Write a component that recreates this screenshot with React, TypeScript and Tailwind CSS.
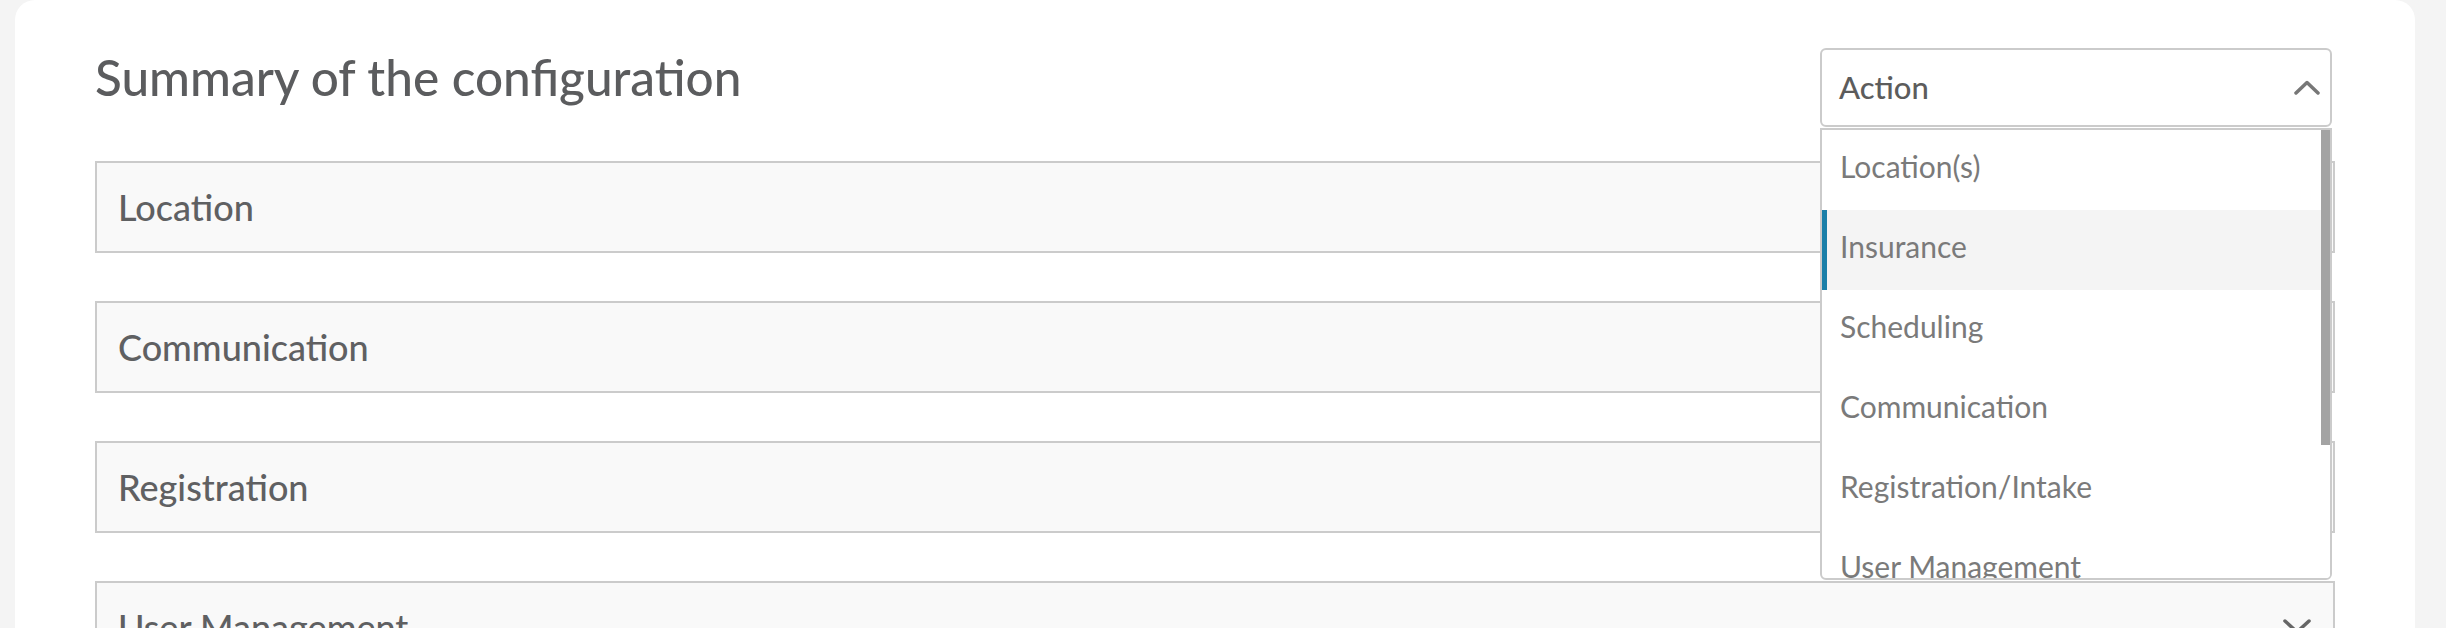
import React from "react";

const sections = ["Location", "Communication", "Registration", "User Management"];
const options = [
  "Location(s)",
  "Insurance",
  "Scheduling",
  "Communication",
  "Registration/Intake",
  "User Management",
];

function ChevronDown() {
  return (
    <svg width="28" height="16" viewBox="0 0 28 16" fill="none">
      <path d="M2 2 L14 13 L26 2" stroke="#666" strokeWidth="3.5" strokeLinecap="round" strokeLinejoin="round" />
    </svg>
  );
}

function ChevronUp() {
  return (
    <svg width="26" height="15" viewBox="0 0 26 15" fill="none">
      <path d="M2 13 L13 2.5 L24 13" stroke="#777" strokeWidth="3.5" strokeLinecap="round" strokeLinejoin="round" />
    </svg>
  );
}

export default function App() {
  return (
    <div
      className="h-[628px] w-full overflow-hidden bg-[#f4f4f4]"
      style={{ fontFamily: "Lato, 'Open Sans', sans-serif" }}
    >
      <div className="ml-[15px] mr-[31px] h-full rounded-t-[20px] bg-white px-[80px] pt-[48px]">
        <div className="flex items-start justify-between pr-[3px]">
          <h1 className="mt-[5px] text-[49.5px] leading-[48px] font-medium text-[#5b5c5e]">
            Summary of the configuration
          </h1>
          <div className="relative w-[512px]">
            <div className="flex h-[79px] items-center justify-between rounded-[6px] border-2 border-[#cbcbcb] bg-white pl-[17px] pr-[10px]">
              <span className="text-[31px] font-medium text-[#5c5c5c]">Action</span>
              <ChevronUp />
            </div>
            <div className="absolute left-0 top-[80px] z-10 flex h-[452px] w-[512px] overflow-hidden rounded-b-[6px] border-2 border-[#cbcbcb] bg-white">
              <div className="flex flex-1 flex-col">
                {options.map((o, i) => (
                  <div
                    key={o}
                    className={
                      i === 1
                        ? "flex h-[80px] shrink-0 items-center border-l-[5px] border-[#1a7fa8] bg-[#f4f4f4] pb-[8px] pl-[13px] text-[30px] font-normal text-[#7a7a7a]"
                        : "flex h-[80px] shrink-0 items-center pb-[8px] pl-[18px] text-[30px] font-normal text-[#7a7a7a]"
                    }
                  >
                    {o}
                  </div>
                ))}
              </div>
              <div className="w-[9px] shrink-0 bg-white">
                <div className="h-[315px] w-[9px] bg-[#a3a3a3]" />
              </div>
            </div>
          </div>
        </div>
        <div className="mt-[34px] flex flex-col gap-[48px]">
          {sections.map((s) => (
            <div
              key={s}
              className="flex h-[92px] items-center justify-between border-2 border-[#cbcbcb] bg-[#f9f9f9] pl-[21px] pr-[22px]"
            >
              <span className="text-[36px] font-medium text-[#5f6062]">{s}</span>
              <ChevronDown />
            </div>
          ))}
        </div>
      </div>
    </div>
  );
}
